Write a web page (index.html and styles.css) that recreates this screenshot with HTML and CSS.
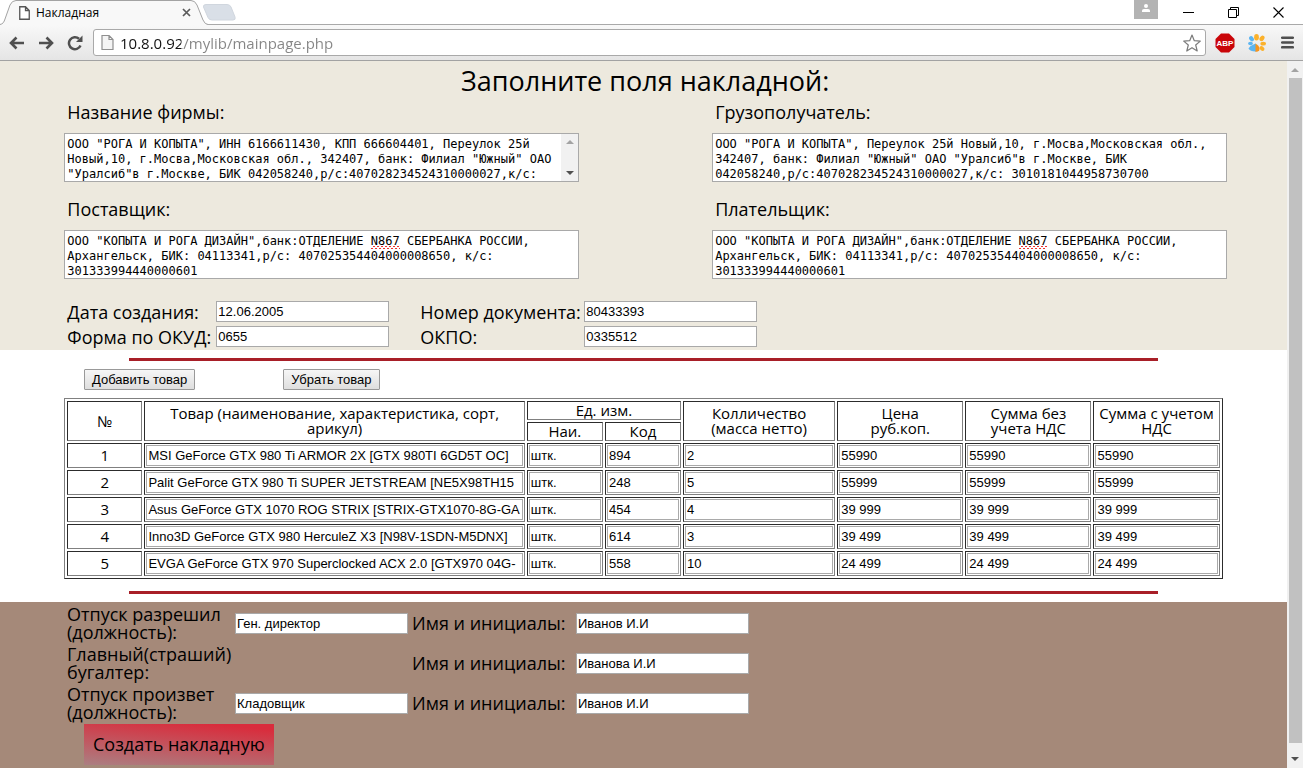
FILE: index.html
```html
<!DOCTYPE html>
<html lang="ru">
<head>
<meta charset="utf-8">
<title>Накладная</title>
<link rel="stylesheet" href="styles.css">
</head>
<body>
<header class="browser">
  <div class="tabstrip">
    <div class="tab">
      <svg class="tab-shape" width="208" height="25" viewBox="0 0 208 25" aria-hidden="true">
        <path d="M0 24.5C3 24 4 22 5 19L10 5Q12 .5 16 .5H191Q195 .5 197 5L203 20Q205 24.5 208 24.5V25H0Z" fill="#f8f8f8"/>
        <path d="M0 24.5C3 24 4 22 5 19L10 5Q12 .5 16 .5H191Q195 .5 197 5L203 20Q205 24.5 208 24.5" fill="none" stroke="#a3a3a3"/>
      </svg>
      <svg class="icon" width="11" height="14" viewBox="0 0 11 14" aria-hidden="true"><path d="M.75.75H6.5L10.25 4.5V13.25H.75ZM6.5.75V4.5H10.25" fill="#fff" stroke="#555" stroke-width="1.3"/></svg>
      <span class="tab-title">Накладная</span>
      <button class="plain" aria-label="Закрыть вкладку"><svg width="9" height="9" viewBox="0 0 9 9"><path d="M1 1L8 8M8 1L1 8" stroke="#5a5a5a" stroke-width="1.7"/></svg></button>
    </div>
    <button class="plain" aria-label="Новая вкладка"><svg width="34" height="17" viewBox="0 0 34 17"><path d="M4 .5H25Q28 .5 29 3L33 13Q34 16 31 16H10Q7 16 6 13.500L1.500 3Q1 .5 4 .5Z" fill="#d9dfe7" stroke="#d0d6de"/></svg></button>
    <div class="window-controls">
      <button class="plain user" aria-label="Пользователь"><svg width="24" height="19" viewBox="0 0 24 19"><path d="M0 0H24V19H0Z" fill="#b3b3b3"/><circle cx="12" cy="6" r="2" fill="#fff"/><path d="M8 12V10.500Q8 9 10 9H14Q16 9 16 10.500V12Z" fill="#fff"/></svg></button>
      <button class="plain" aria-label="Свернуть"><svg width="11" height="11" viewBox="0 0 11 11"><path d="M0 5.500H11" stroke="#000"/></svg></button>
      <button class="plain" aria-label="Восстановить"><svg width="11" height="11" viewBox="0 0 11 11"><path d="M.5 2.500H8.500V10.500H.5ZM2.500 2.500V.5H10.500V8.500H8.500" fill="none" stroke="#000"/></svg></button>
      <button class="plain" aria-label="Закрыть"><svg width="11" height="11" viewBox="0 0 11 11"><path d="M.5.5L10.500 10.500M10.500.5L.5 10.500" stroke="#000" stroke-width="1.1"/></svg></button>
    </div>
  </div>
  <div class="toolbar">
    <button class="plain" aria-label="Назад"><svg width="16" height="14" viewBox="0 0 16 14"><path d="M15 7H2.500M7.500 1.500L2 7L7.500 12.500" fill="none" stroke="#505050" stroke-width="2.600"/></svg></button>
    <button class="plain" aria-label="Вперёд"><svg width="16" height="14" viewBox="0 0 16 14"><path d="M1 7H13.500M8.500 1.500L14 7L8.500 12.500" fill="none" stroke="#505050" stroke-width="2.600"/></svg></button>
    <button class="plain" aria-label="Обновить"><svg width="16" height="16" viewBox="0 0 16 16"><path d="M13.500 10.500A6 6 0 1 1 12 3.700" fill="none" stroke="#505050" stroke-width="2.500"/><path d="M15.500.5V7H9Z" fill="#505050"/></svg></button>
    <div class="omnibox">
      <svg width="13" height="15" viewBox="0 0 13 15" aria-hidden="true"><path d="M1 .5H8L12 4.500V14.500H1ZM8 .5V4.500H12" fill="#f4f4f4" stroke="#8f8f8f" stroke-width="1.200"/></svg>
      <input class="url" type="text" aria-label="Адрес" value="10.8.0.92/mylib/mainpage.php" spellcheck="false">
      <button class="plain" aria-label="Добавить в закладки"><svg width="18" height="18" viewBox="0 0 18 18"><path d="M9 1L11.300 6.700L17.300 7.100L12.700 11L14.200 17L9 13.700L3.800 17L5.300 11L.7 7.100L6.700 6.700Z" fill="#fff" stroke="#7b7b7b" stroke-width="1.200" stroke-linejoin="round"/></svg></button>
    </div>
    <button class="plain" aria-label="Adblock Plus"><svg width="20" height="20" viewBox="0 0 20 20"><path d="M6 .5H14L19.500 6V14L14 19.500H6L.5 14V6Z" fill="#c90509"/><text class="abp" x="10" y="13" text-anchor="middle">ABP</text></svg></button>
    <button class="plain" aria-label="Расширение"><svg width="18" height="18" viewBox="0 0 18 18"><g fill="#fbb12b"><ellipse cx="8.500" cy="3.200" rx="2.400" ry="3.200"/><ellipse cx="14" cy="4.300" rx="2.200" ry="3" transform="rotate(38 14 4.300)"/><ellipse cx="15.200" cy="9.700" rx="2.800" ry="1.900"/><ellipse cx="14" cy="14.500" rx="2" ry="2.800" transform="rotate(-48 14 14.500)"/><path d="M7 9.500Q11.500 11 11.500 15Q11 18.500 7 17.500Z" fill="#f7941d"/></g><g fill="#5cb5f2"><ellipse cx="3.500" cy="4.800" rx="2.100" ry="2.800" transform="rotate(-38 3.500 4.800)"/><ellipse cx="2.500" cy="9.500" rx="2.400" ry="1.700"/><path d="M7.500 9.500V17.500Q2 17.500 .5 14.500Q3 11 7.500 9.500Z"/></g></svg></button>
    <button class="plain" aria-label="Меню"><svg width="13" height="13" viewBox="0 0 13 13"><path d="M1.200 1.700H11.800M1.200 6.500H11.800M1.200 11.300H11.800" stroke="#4f4f4f" stroke-width="2.600" stroke-linecap="round"/></svg></button>
  </div>
</header>

<div class="viewport">
<main class="page">
  <section class="details">
    <h1>Заполните поля накладной:</h1>
    <div class="parties">
      <div class="party">
        <label for="firm">Название фирмы:</label>
        <div class="area">
          <textarea id="firm" spellcheck="false" rows="3">ООО "РОГА И КОПЫТА", ИНН 6166611430, КПП 666604401, Переулок 25й
Новый,10, г.Мосва,Московская обл., 342407, банк: Филиал "Южный" ОАО
"Уралсиб"в г.Москве, БИК 042058240,р/с:407028234524310000027,к/с:</textarea>
          <span class="area-scroll" aria-hidden="true"><i class="arrow up"></i><i class="arrow down"></i></span>
        </div>
      </div>
      <div class="party">
        <label for="consignee">Грузополучатель:</label>
        <div class="area">
          <textarea id="consignee" spellcheck="false" rows="3">ООО "РОГА И КОПЫТА", Переулок 25й Новый,10, г.Мосва,Московская обл.,
342407, банк: Филиал "Южный" ОАО "Уралсиб"в г.Москве, БИК
042058240,р/с:407028234524310000027,к/с: 3010181044958730700</textarea>
        </div>
      </div>
      <div class="party">
        <label for="supplier">Поставщик:</label>
        <div class="area">
          <textarea id="supplier" spellcheck="false" rows="3">ООО "КОПЫТА И РОГА ДИЗАЙН",банк:ОТДЕЛЕНИЕ N867 СБЕРБАНКА РОССИИ,
Архангельск, БИК: 04113341,р/с: 407025354404000008650, к/с:
301333994440000601</textarea>
          <span class="squiggle" aria-hidden="true"></span>
        </div>
      </div>
      <div class="party">
        <label for="payer">Плательщик:</label>
        <div class="area">
          <textarea id="payer" spellcheck="false" rows="3">ООО "КОПЫТА И РОГА ДИЗАЙН",банк:ОТДЕЛЕНИЕ N867 СБЕРБАНКА РОССИИ,
Архангельск, БИК: 04113341,р/с: 407025354404000008650, к/с:
301333994440000601</textarea>
          <span class="squiggle" aria-hidden="true"></span>
        </div>
      </div>
    </div>
    <div class="codes">
      <label for="date">Дата создания:</label><input id="date" type="text" value="12.06.2005">
      <label class="second" for="number">Номер документа:</label><input id="number" type="text" value="80433393">
      <label for="okud">Форма по ОКУД:</label><input id="okud" type="text" value="0655">
      <label class="second" for="okpo">ОКПО:</label><input id="okpo" type="text" value="0335512">
    </div>
  </section>

  <section class="goods">
    <hr>
    <div class="actions">
      <button class="native">Добавить товар</button>
      <button class="native">Убрать товар</button>
    </div>
    <table>
      <colgroup><col class="c-num"><col class="c-name"><col class="c-unit"><col class="c-unit"><col class="c-qty"><col class="c-sum"><col class="c-sum"><col class="c-sum"></colgroup>
      <thead>
        <tr><th rowspan="2">№</th><th rowspan="2">Товар (наименование, характеристика, сорт, арикул)</th><th colspan="2">Ед. изм.</th><th rowspan="2">Колличество<br>(масса нетто)</th><th rowspan="2">Цена<br>руб.коп.</th><th rowspan="2">Сумма без<br>учета НДС</th><th rowspan="2">Сумма с учетом<br>НДС</th></tr>
        <tr><th>Наи.</th><th>Код</th></tr>
      </thead>
      <tbody>
        <tr><td>1</td><td><input aria-label="Товар" value="MSI GeForce GTX 980 Ti ARMOR 2X [GTX 980TI 6GD5T OC]"></td><td><input aria-label="Наименование единицы" value="штк."></td><td><input aria-label="Код" value="894"></td><td><input aria-label="Количество" value="2"></td><td><input aria-label="Цена" value="55990"></td><td><input aria-label="Сумма без НДС" value="55990"></td><td><input aria-label="Сумма с НДС" value="55990"></td></tr>
        <tr><td>2</td><td><input aria-label="Товар" value="Palit GeForce GTX 980 Ti SUPER JETSTREAM [NE5X98TH15"></td><td><input aria-label="Наименование единицы" value="штк."></td><td><input aria-label="Код" value="248"></td><td><input aria-label="Количество" value="5"></td><td><input aria-label="Цена" value="55999"></td><td><input aria-label="Сумма без НДС" value="55999"></td><td><input aria-label="Сумма с НДС" value="55999"></td></tr>
        <tr><td>3</td><td><input aria-label="Товар" value="Asus GeForce GTX 1070 ROG STRIX [STRIX-GTX1070-8G-GA"></td><td><input aria-label="Наименование единицы" value="штк."></td><td><input aria-label="Код" value="454"></td><td><input aria-label="Количество" value="4"></td><td><input aria-label="Цена" value="39 999"></td><td><input aria-label="Сумма без НДС" value="39 999"></td><td><input aria-label="Сумма с НДС" value="39 999"></td></tr>
        <tr><td>4</td><td><input aria-label="Товар" value="Inno3D GeForce GTX 980 HerculeZ X3 [N98V-1SDN-M5DNX]"></td><td><input aria-label="Наименование единицы" value="штк."></td><td><input aria-label="Код" value="614"></td><td><input aria-label="Количество" value="3"></td><td><input aria-label="Цена" value="39 499"></td><td><input aria-label="Сумма без НДС" value="39 499"></td><td><input aria-label="Сумма с НДС" value="39 499"></td></tr>
        <tr><td>5</td><td><input aria-label="Товар" value="EVGA GeForce GTX 970 Superclocked ACX 2.0 [GTX970 04G-"></td><td><input aria-label="Наименование единицы" value="штк."></td><td><input aria-label="Код" value="558"></td><td><input aria-label="Количество" value="10"></td><td><input aria-label="Цена" value="24 499"></td><td><input aria-label="Сумма без НДС" value="24 499"></td><td><input aria-label="Сумма с НДС" value="24 499"></td></tr>
      </tbody>
    </table>
    <hr>
  </section>

  <section class="signatures">
    <div class="signers">
      <label for="post1">Отпуск разрешил (должность):</label><input id="post1" type="text" value="Ген. директор">
      <label for="name1">Имя и инициалы:</label><input id="name1" type="text" value="Иванов И.И">
      <span>Главный(страший) бугалтер:</span><span></span>
      <label for="name2">Имя и инициалы:</label><input id="name2" type="text" value="Иванова И.И">
      <label for="post3">Отпуск произвет (должность):</label><input id="post3" type="text" value="Кладовщик">
      <label for="name3">Имя и инициалы:</label><input id="name3" type="text" value="Иванов И.И">
    </div>
    <button class="submit">Создать накладную</button>
  </section>
</main>
<div class="scrollbar" aria-hidden="true"><i class="arrow up"></i><span class="thumb"></span><i class="arrow down"></i></div>
</div>
</body>
</html>
```
FILE: styles.css
```css
* { box-sizing: border-box; }

body {
  margin: 0;
  height: 100vh;
  display: flex;
  flex-direction: column;
  overflow: hidden;
  background: #fff;
  color: #000;
  font-family: "Comic Sans MS", "Open Sans", sans-serif;
  font-size: 18px;
  line-height: 18px;
}

svg { display: block; }

.plain {
  display: block;
  padding: 0;
  border: 0;
  background: none;
}

/* Browser window */
.browser { flex: none; }

.tabstrip {
  display: flex;
  height: 25px;
  align-items: center;
  box-shadow: inset 0 -1px #a9a9a9;
}

.tab {
  position: relative;
  display: flex;
  align-items: center;
  width: 202px;
  height: 25px;
  padding: 0 11px 0 19px;
}

.tab-shape { position: absolute; left: 0; top: 0; }
.icon, .tab-title, .tab .plain { position: relative; }

.tab-title {
  flex: 1;
  padding-left: 6px;
  font: 12px "Segoe UI", "Open Sans", sans-serif;
}

.window-controls {
  display: flex;
  align-items: center;
  gap: 34px;
  height: 100%;
  margin-left: auto;
  padding-right: 19px;
}

.user { align-self: flex-start; margin-right: -9px; }

.toolbar {
  display: flex;
  align-items: center;
  gap: 13px;
  height: 36px;
  padding: 0 9px;
  background: linear-gradient(#f8f8f8, #e5e5e5);
  border-bottom: 1px solid #a2a2a2;
}

.omnibox {
  flex: 1;
  display: flex;
  align-items: center;
  gap: 6px;
  height: 27px;
  margin: 0 -4px 0 -3px;
  padding: 0 4px 0 7px;
  border: 1px solid #a9a9a9;
  border-radius: 3px;
  background: #fff;
}

.toolbar .plain:nth-last-child(2) { margin: 0 2px 0 0; }

.url {
  flex: 1;
  min-width: 0;
  padding: 0;
  border: 0;
  outline: 0;
  background: linear-gradient(90deg, #111 61px, #858585 61px) text;
  color: transparent;
  font: 15px/24px "Segoe UI", "Open Sans", sans-serif;
}

.abp { fill: #fff; font: bold 8px "Liberation Sans", Arial, sans-serif; }

/* Page and its scrollbar */
.viewport { flex: 1; min-height: 0; display: flex; }

.page {
  flex: 1;
  min-width: 0;
  display: flex;
  flex-direction: column;
  overflow: hidden;
}

.scrollbar {
  display: flex;
  flex-direction: column;
  align-items: center;
  gap: 6px;
  width: 16px;
  padding: 7px 0;
  background: #f1f1f1;
}

.thumb { flex: 1; width: 13px; margin-bottom: 8px; background: #c1c1c1; }

.arrow { border: 4px solid transparent; border-top-width: 0; border-bottom-width: 0; }
.arrow.up { border-bottom: 4px solid #a3a3a3; }
.arrow.down { border-top: 4px solid #505050; }

input, textarea {
  margin: 0;
  border: 1px solid #a9a9a9;
  border-radius: 0;
  background: #fff;
  color: #000;
}

input {
  height: 21px;
  padding: 1px;
  font: 13px "Liberation Sans", Arial, sans-serif;
}

/* Invoice details */
.details { padding: 5px 0 3px 5%; background: #ede9de; }

h1 {
  margin: 0 5% 0 0;
  font-size: 27px;
  font-weight: normal;
  line-height: 30px;
  text-align: center;
}

.parties {
  display: grid;
  grid-template-columns: 515fr 515fr;
  column-gap: 133px;
  row-gap: 11px;
  margin-right: 60px;
}

.party label {
  display: block;
  padding: 7px 3px 12px;
}

.area {
  position: relative;
  height: 49px;
  font: 12px/15px Consolas, "DejaVu Sans Mono", monospace;
}

.party { min-width: 0; }

textarea {
  display: block;
  width: 100%;
  height: 100%;
  padding: 3px 2px 0;
  resize: none;
  overflow: hidden;
  white-space: pre;
  font: inherit;
}

.area-scroll {
  position: absolute;
  top: 1px;
  right: 1px;
  bottom: 1px;
  display: flex;
  flex-direction: column;
  justify-content: space-between;
  align-items: center;
  width: 17px;
  padding: 6px 0;
  background: #f1f1f1;
}

.squiggle {
  position: absolute;
  top: 16px;
  left: calc(42ch + 3px);
  width: 4ch;
  height: 3px;
  background:
    conic-gradient(#e33 25%, transparent 0 50%, #e33 0 75%, transparent 0) 0 0 / 4px 3px;
}

.codes {
  display: grid;
  grid-template-columns: 152px 204px 164px 173px;
  row-gap: 4px;
  align-items: center;
  padding-top: 22px;
}

.codes label { padding-left: 3px; }
.codes .second { padding-left: 0; }
.codes input { width: 173px; }

/* Goods */
.goods { padding: 8px 0; }

hr {
  width: 80%;
  height: 3px;
  margin: 0 auto;
  border: 0;
  background: #a81f28;
}

.actions {
  display: flex;
  gap: 88px;
  padding: 8px 84px;
}

.native {
  height: 21px;
  padding: 0 7px;
  border: 1px solid #999;
  border-radius: 1px;
  background: linear-gradient(#f6f6f6, #dedede);
  color: #000;
  font: 13px "Liberation Sans", Arial, sans-serif;
}

table {
  width: 90%;
  margin: 0 auto 12px;
  table-layout: fixed;
  border: 1px solid;
  border-color: #808080 #2c2c2c #2c2c2c #808080;
  border-spacing: 2px;
}

.c-num { width: 75px; }
.c-name { width: 380px; }
.c-unit { width: 76px; }
.c-qty { width: 152px; }
.c-sum { width: 126px; }

th, td {
  padding: 1px;
  border: 1px solid;
  border-color: #2c2c2c #808080 #808080 #2c2c2c;
  font-size: 15px;
  font-weight: normal;
  line-height: 15px;
  text-align: center;
}

td input { display: block; width: 100%; }

/* Signatures */
.signatures { flex: 1; padding: 3px 67px; background: #a58979; }

.signers {
  display: grid;
  grid-template-columns: 168px 177px 164px 173px;
  row-gap: 4px;
  align-items: center;
}

.signers input { width: 173px; }

.submit {
  margin: 3px 17px;
  padding: 10px 9px;
  border: 0;
  background: linear-gradient(5deg, #ab7f82, #d92c3c 90%);
  color: #000;
  font: 18px/21px "Comic Sans MS", "Open Sans", sans-serif;
}
```
